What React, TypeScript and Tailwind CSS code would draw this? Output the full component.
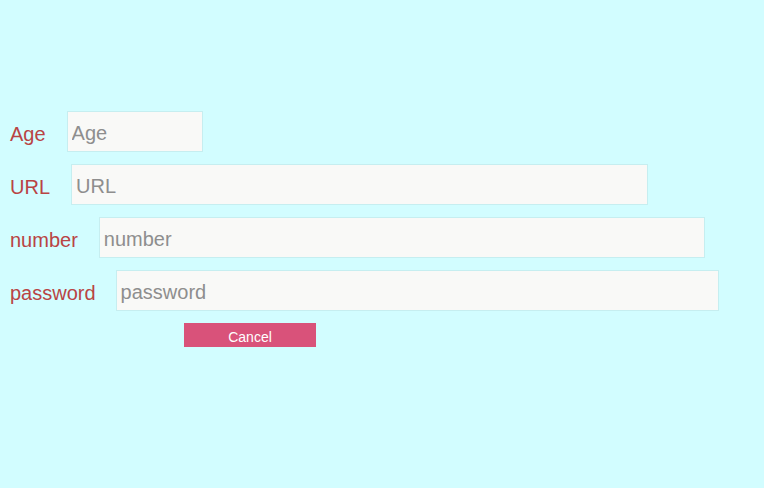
import React from "react";

const rows = [
  { label: "Age", w: "w-[136px]", type: "text", gap: "gap-[21px]" },
  { label: "URL", w: "w-[577px]", type: "url", gap: "gap-[21px]" },
  { label: "number", w: "w-[606px]", type: "text", gap: "gap-[21px]" },
  { label: "password", w: "w-[603px]", type: "password", gap: "gap-[20px]" },
];

export default function App() {
  return (
    <div className="min-h-[488px] w-full bg-[#d2fdff] pt-[111px] pl-[10px] font-['Liberation_Sans',Arial,sans-serif]">
      <div className="flex flex-col gap-[12px]">
        {rows.map((r) => (
          <div key={r.label} className={`flex items-center ${r.gap}`}>
            <span className="translate-y-[2px] text-[20px] leading-none text-[#b94444]">{r.label}</span>
            <input
              type={r.type}
              placeholder={r.label}
              className={`${r.w} h-[41px] border border-[#c6eef0] bg-[#f9f9f7] px-[4px] pt-[4px] pb-0 text-[20px] text-[#555] outline-none placeholder:text-[#8e8e8e]`}
            />
          </div>
        ))}
        <div className="pl-[174px]">
          <button className="h-[24px] w-[132px] bg-[#d9527a] pt-[3px] text-[14px] leading-none text-white">
            Cancel
          </button>
        </div>
      </div>
    </div>
  );
}
